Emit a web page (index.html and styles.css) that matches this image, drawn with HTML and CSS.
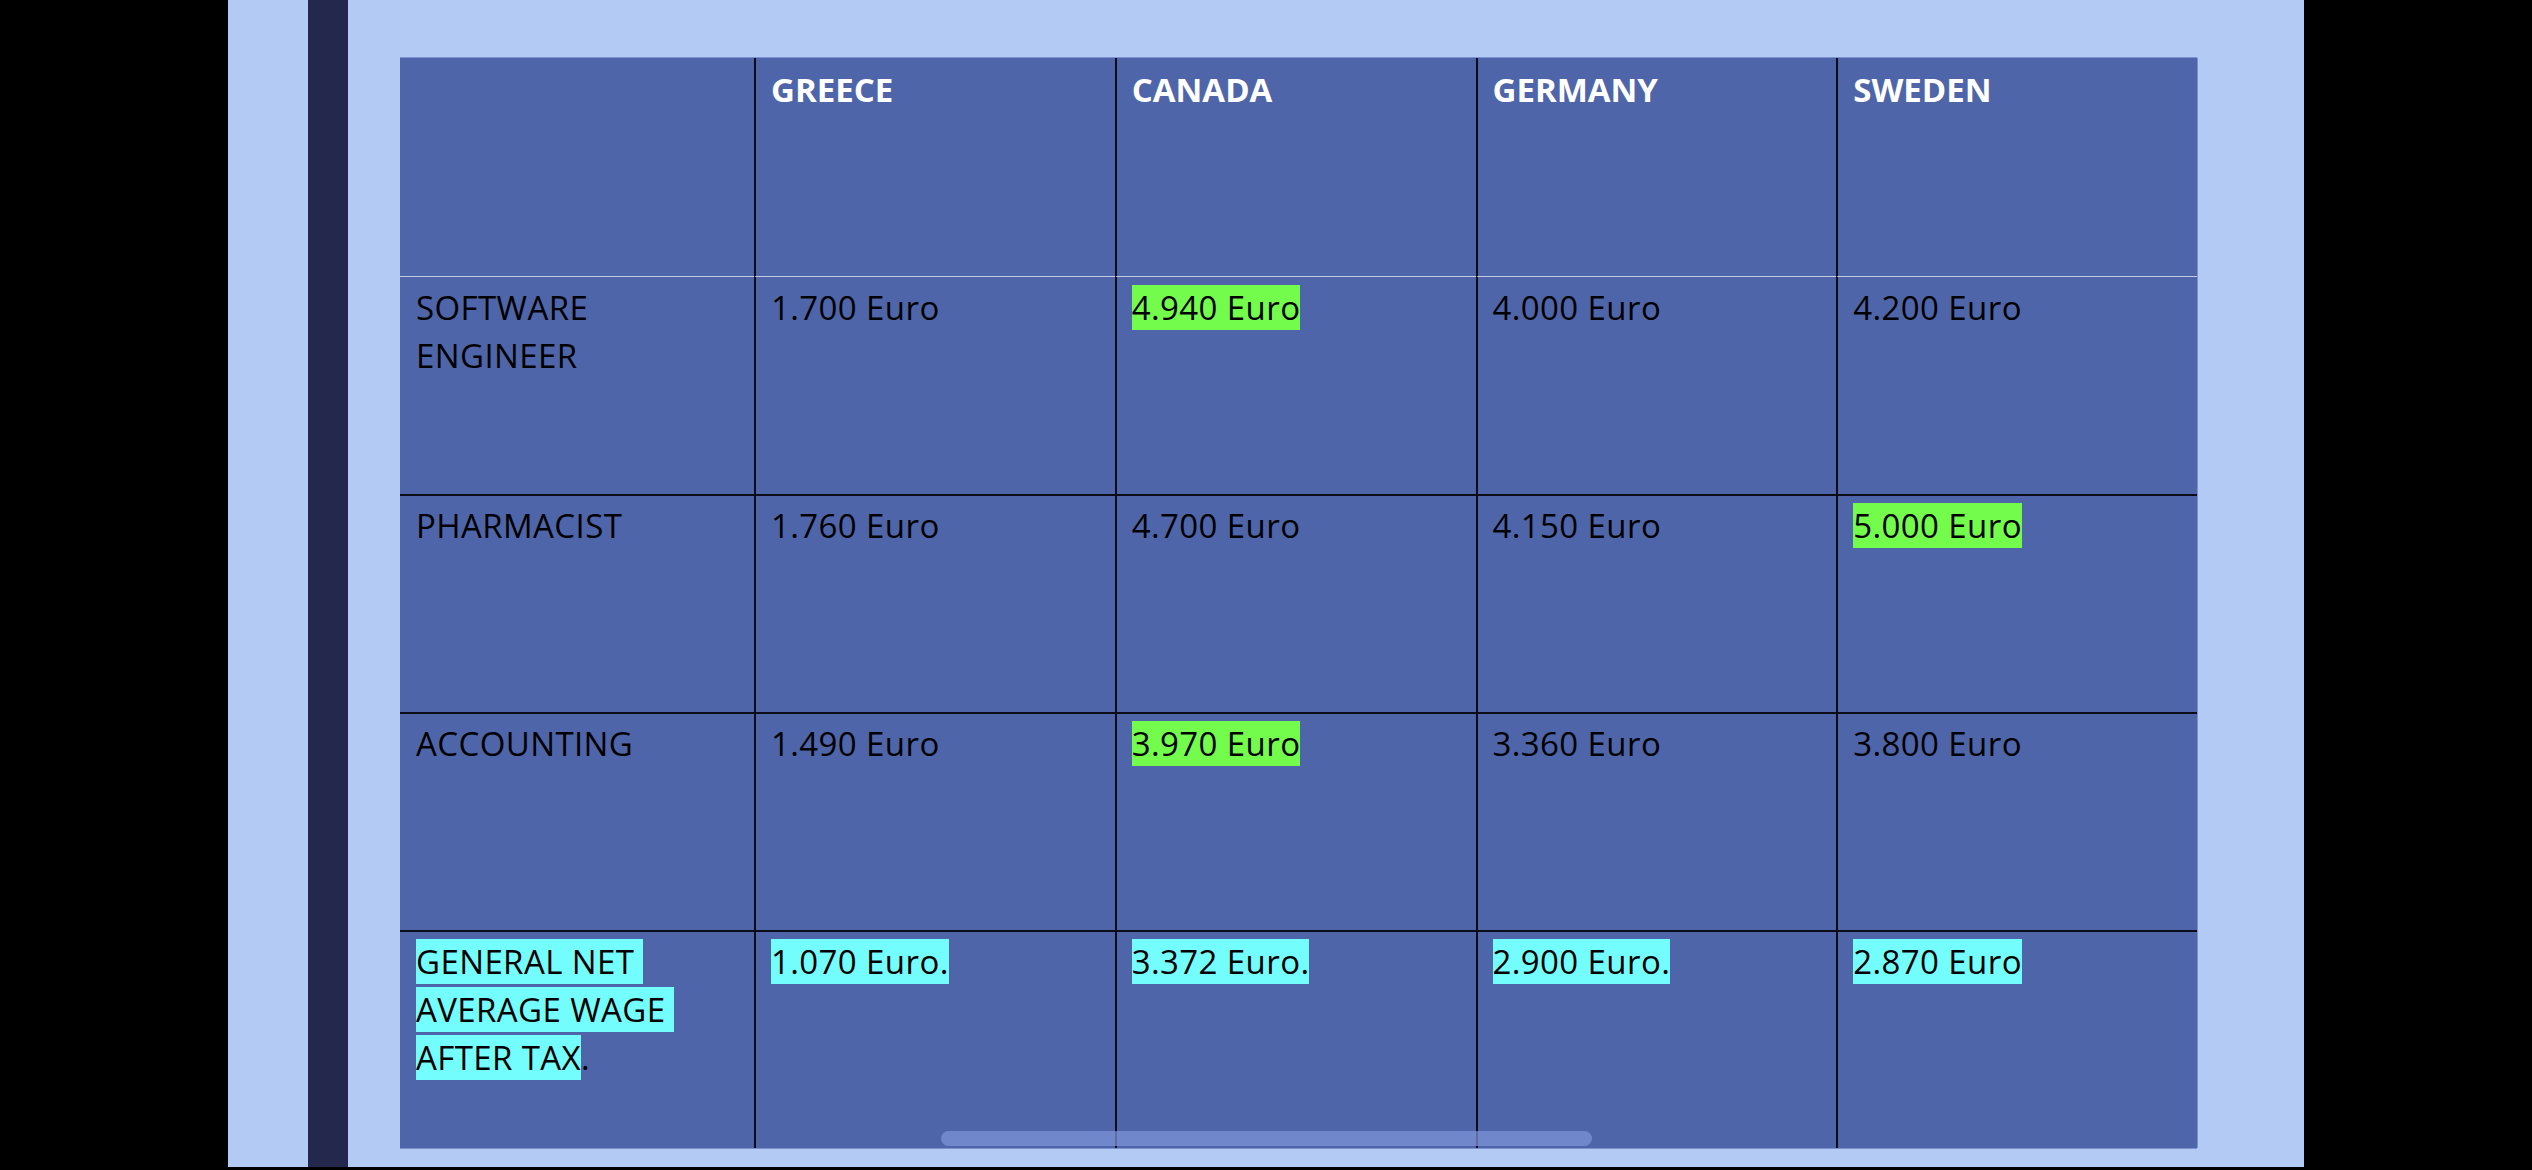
FILE: index.html
```html
<!DOCTYPE html>
<html lang="en">
<head>
    <meta charset="UTF-8">
    <meta name="viewport" content="width=device-width, initial-scale=1.0">
    <title>Net Wages</title>
    <link rel="stylesheet" href="styles.css">
</head>
<body>
    <div class="slide">
        <div class="stripe"></div>
        <div class="wage-table">
            <div class="cell head"></div>
            <div class="cell head col">GREECE</div>
            <div class="cell head col">CANADA</div>
            <div class="cell head col">GERMANY</div>
            <div class="cell head col">SWEDEN</div>

            <div class="cell first">SOFTWARE<br>ENGINEER</div>
            <div class="cell first col">1.700 Euro</div>
            <div class="cell first col"><span class="hl-green">4.940 Euro</span></div>
            <div class="cell first col">4.000 Euro</div>
            <div class="cell first col">4.200 Euro</div>

            <div class="cell row">PHARMACIST</div>
            <div class="cell row col">1.760 Euro</div>
            <div class="cell row col">4.700 Euro</div>
            <div class="cell row col">4.150 Euro</div>
            <div class="cell row col"><span class="hl-green">5.000 Euro</span></div>

            <div class="cell row">ACCOUNTING</div>
            <div class="cell row col">1.490 Euro</div>
            <div class="cell row col"><span class="hl-green">3.970 Euro</span></div>
            <div class="cell row col">3.360 Euro</div>
            <div class="cell row col">3.800 Euro</div>

            <div class="cell row"><span class="hl-cyan">GENERAL NET&nbsp;</span><br><span class="hl-cyan">AVERAGE WAGE&nbsp;</span><br><span class="hl-cyan">AFTER TAX</span>.</div>
            <div class="cell row col"><span class="hl-cyan">1.070 Euro.</span></div>
            <div class="cell row col"><span class="hl-cyan">3.372 Euro.</span></div>
            <div class="cell row col"><span class="hl-cyan">2.900 Euro.</span></div>
            <div class="cell row col"><span class="hl-cyan">2.870 Euro</span></div>

            <div class="scrollbar"></div>
        </div>
    </div>
</body>
</html>
```

FILE: styles.css
```css
* {
    box-sizing: border-box;
}
body {
    margin: 0;
    padding-left: 228px;
    height: 1170px;
    background-color: #000;
    font-family: "Open Sans", "Liberation Sans", sans-serif;
    overflow: hidden;
}
.slide {
    display: flex;
    width: 2076px;
    height: 1167px;
    padding-left: 80px;
    background-color: #b3caf5;
}
.stripe {
    width: 40px;
    background-color: #25284d;
}
.wage-table {
    position: relative;
    display: grid;
    grid-template-columns: 354px repeat(4, 1fr);
    grid-auto-rows: 218px;
    width: 1797px;
    height: 1090px;
    margin: 58px 0 0 52px;
    background-color: #4f65a9;
    box-shadow: 1px 0 0 #7a90cf, 0 -1px 0 #7a90cf, 0 1px 0 #7a90cf;
}
.cell {
    padding: 8px 15px 0 16px;
    font-size: 33px;
    line-height: 48px;
    letter-spacing: 0.4px;
    color: #000;
}
.cell.col {
    border-left: 2px solid #0b0c18;
    padding-left: 15px;
}
.cell.head {
    color: #fff;
    font-weight: 700;
    letter-spacing: 0;
}
.cell.first {
    border-top: 1px solid #c5cbe4;
    padding-top: 7px;
}
.cell.row {
    border-top: 2px solid #0b0c18;
    padding-top: 6px;
}
.hl-green {
    background-color: #74fc4d;
}
.hl-cyan {
    background-color: #74fdfd;
}
.scrollbar {
    position: absolute;
    left: 541px;
    bottom: 2px;
    width: 651px;
    height: 15px;
    border-radius: 8px;
    background-color: rgba(128, 150, 220, 0.7);
}
```
